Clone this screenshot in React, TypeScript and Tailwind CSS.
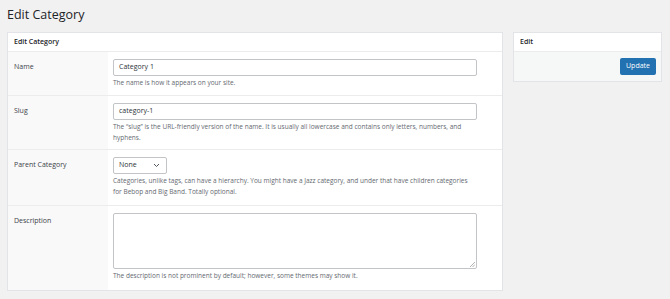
const font = { fontFamily: '"Open Sans", "Noto Sans", sans-serif' };

function Row({
  label,
  children,
  last,
  className = '',
}: {
  label: string;
  children: React.ReactNode;
  last?: boolean;
  className?: string;
}) {
  return (
    <div className={`flex ${last ? '' : 'border-b border-[#ececec]'}`}>
      <div className="w-[100px] shrink-0 bg-[#f9f9f9] pl-[6px] pt-[10px] text-[7px] leading-[10px] text-[#3c434a]">{label}</div>
      <div className={`flex-1 bg-white pl-[5px] pr-[25px] ${className}`}>{children}</div>
    </div>
  );
}

function Help({ children }: { children: React.ReactNode }) {
  return <p className="mt-[1px] text-[6.5px] leading-[11px] text-[#646970]">{children}</p>;
}

export default function App() {
  return (
    <div style={font} className="min-h-[299px] w-[670px] bg-[#f1f1f1] pl-[7px] pr-[8px] pt-[5px]">
      <h1 className="text-[12.5px] leading-[20px] text-[#1d2327]">Edit Category</h1>

      <div className="mt-[7px] flex items-start gap-[10px]">
        {/* main form */}
        <div className="w-[496px] border border-[#e2e4e7] bg-white">
          <div className="flex h-[19px] items-center border-b border-[#ececec] pl-[6px] text-[7px] font-semibold text-[#1d2327]">
            Edit Category
          </div>

          <Row label="Name" className="pt-[7px] pb-[7px]">
            <div className="flex h-[17px] items-center rounded-[2px] border border-[#c3c4c7] px-[5px] text-[7px] text-[#2c3338]">
              Category 1
            </div>
            <Help>The name is how it appears on your site.</Help>
          </Row>

          <Row label="Slug" className="pt-[7px] pb-[6px]">
            <div className="flex h-[17px] items-center rounded-[2px] border border-[#c3c4c7] px-[5px] text-[7px] text-[#2c3338]">
              category-1
            </div>
            <Help>
              The “slug” is the URL-friendly version of the name. It is usually all lowercase and contains only letters, numbers, and hyphens.
            </Help>
          </Row>

          <Row label="Parent Category" className="pt-[7px] pb-[8px]">
            <div className="flex h-[17px] w-[54px] items-center justify-between rounded-[2px] border border-[#c3c4c7] pl-[5px] pr-[6px] text-[7px] text-[#2c3338]">
              <span>None</span>
              <svg width="7" height="5" viewBox="0 0 7 5" fill="none">
                <path d="M1 1l2.5 2.5L6 1" stroke="#50575e" strokeWidth="1" />
              </svg>
            </div>
            <Help>
              Categories, unlike tags, can have a hierarchy. You might have a Jazz category, and under that have children categories for Bebop and Big Band. Totally optional.
            </Help>
          </Row>

          <Row label="Description" last className="pt-[7px] pb-[9px]">
            <div className="relative h-[56px] rounded-[2px] border border-[#c3c4c7]">
              <svg className="absolute bottom-[1px] right-[1px]" width="5" height="5" viewBox="0 0 5 5">
                <path d="M5 0L0 5M5 2.5L2.5 5" stroke="#a0a0a0" strokeWidth="0.8" />
              </svg>
            </div>
            <Help>The description is not prominent by default; however, some themes may show it.</Help>
          </Row>
        </div>

        {/* sidebar */}
        <div className="w-[149px] border border-[#e2e4e7] bg-white">
          <div className="flex h-[19px] items-center border-b border-[#ececec] pl-[6px] text-[7px] font-semibold text-[#1d2327]">
            Edit
          </div>
          <div className="flex h-[29px] items-center justify-end bg-[#f6f7f7] pr-[5px]">
            <button className="h-[17px] rounded-[2px] bg-[#2271b1] px-[6px] text-[7px] text-white">Update</button>
          </div>
        </div>
      </div>
    </div>
  );
}
